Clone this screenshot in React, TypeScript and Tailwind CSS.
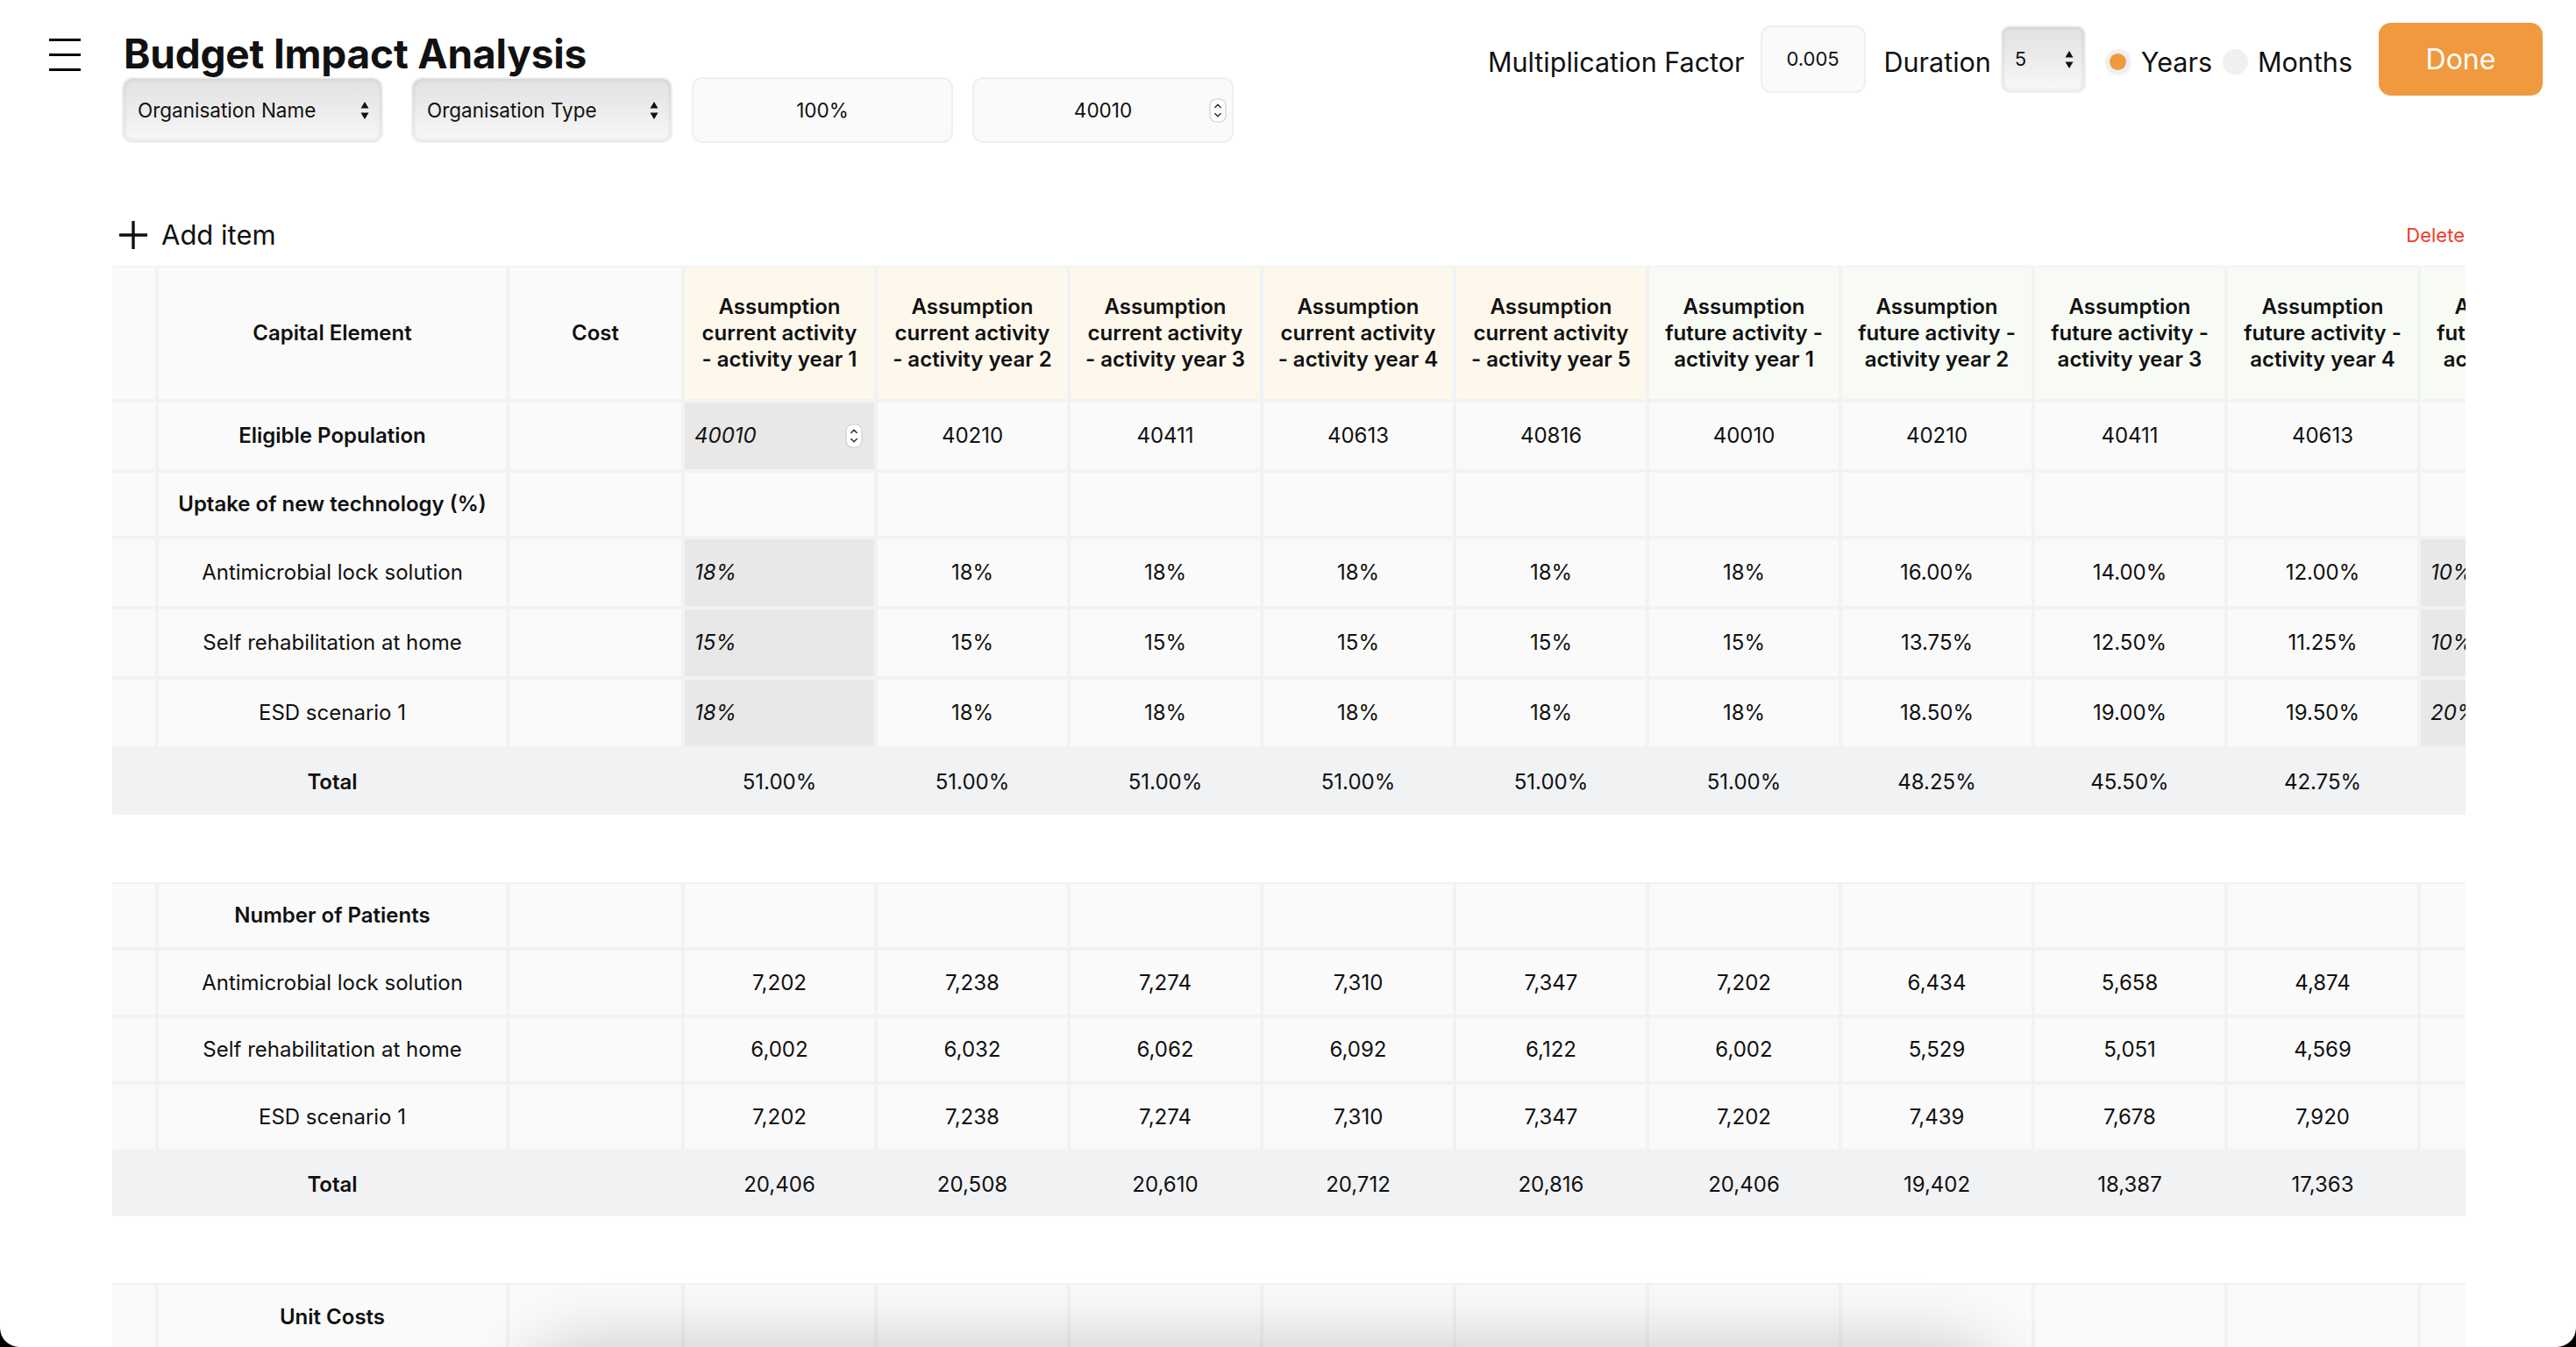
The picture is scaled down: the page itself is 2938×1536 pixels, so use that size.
import React from "react";

const GRID = "grid grid-cols-[49px_396px_196px_repeat(10,216px)] gap-x-[4px]";

type InputCell = { v: string; input: true; spin?: boolean };
type Cell = string | InputCell;

function Spinner() {
  return (
    <svg width="20" height="28" viewBox="0 0 20 28">
      <rect x="1" y="1" width="18" height="26" rx="7" fill="#ffffff" stroke="#cfcfcf" strokeWidth="1.2" />
      <path d="M6.8 10.5 L10 7.2 L13.2 10.5" fill="none" stroke="#333" strokeWidth="1.5" strokeLinecap="round" strokeLinejoin="round" />
      <path d="M6.8 17.5 L10 20.8 L13.2 17.5" fill="none" stroke="#333" strokeWidth="1.5" strokeLinecap="round" strokeLinejoin="round" />
    </svg>
  );
}

function SelectArrows() {
  return (
    <svg width="10" height="24" viewBox="0 0 10 24">
      <path d="M5 2 L9.5 9.5 H0.5 Z" fill="#111" />
      <path d="M5 22 L9.5 14.5 H0.5 Z" fill="#111" />
    </svg>
  );
}

function DataCell({ c }: { c: Cell }) {
  if (typeof c === "string") {
    return <div className="bg-[#fafafa] flex items-center justify-center whitespace-nowrap">{c}</div>;
  }
  return (
    <div className="bg-[#e8e8e8] flex items-center justify-between pl-[11px] pr-[13px] italic whitespace-nowrap">
      <span>{c.v}</span>
      {c.spin ? <Spinner /> : null}
    </div>
  );
}

function DataRow({ label, bold, cells, h }: { label: string; bold?: boolean; cells: Cell[]; h: string }) {
  return (
    <div className={`${GRID} ${h}`}>
      <div className="bg-[#fafafa]" />
      <div className={`bg-[#fafafa] flex items-center justify-center whitespace-nowrap ${bold ? "font-semibold" : ""}`}>
        {label}
      </div>
      <div className="bg-[#fafafa]" />
      {cells.map((c, i) => (
        <DataCell key={i} c={c} />
      ))}
    </div>
  );
}

function TotalRow({ values, h }: { values: string[]; h: string }) {
  return (
    <div className={`${GRID} ${h} bg-[#f1f2f4]`}>
      <div />
      <div className="flex items-center justify-center font-semibold">Total</div>
      <div />
      {values.map((v, i) => (
        <div key={i} className="flex items-center justify-center whitespace-nowrap">
          {v}
        </div>
      ))}
    </div>
  );
}

const empty10 = ["", "", "", "", "", "", "", "", "", ""];

export default function App() {
  const headers: { lines: string[]; future: boolean }[] = [
    ...[1, 2, 3, 4, 5].map((n) => ({
      lines: ["Assumption", "current activity", `- activity year ${n}`],
      future: false,
    })),
    ...[1, 2, 3, 4, 5].map((n) => ({
      lines: ["Assumption", "future activity -", `activity year ${n}`],
      future: true,
    })),
  ];

  return (
    <div className="h-[1536px] w-[2938px] bg-black overflow-hidden font-['Inter','Liberation_Sans',sans-serif] text-[#111]">
      <div className="relative h-full w-full bg-white rounded-b-[22px] overflow-hidden">
        {/* Header */}
        <div className="flex items-start justify-between pt-[26px] pl-[56px] pr-[38px]">
          <div className="flex items-start">
            <div className="mt-[18px] w-[36px] flex flex-col gap-[14px]">
              <div className="h-[3px] bg-black" />
              <div className="h-[3px] bg-black" />
              <div className="h-[3px] bg-black" />
            </div>
            <div className="ml-[47px] flex flex-col">
              <h1 className="mt-[14px] text-[46px] leading-[42px] font-bold tracking-[-0.2px] pl-[2px]">Budget Impact Analysis</h1>
              <div className="mt-[6px] flex text-[22.5px]">
                <div className="w-[298px] h-[75px] rounded-[12px] border-2 border-[#eeeeee] bg-linear-to-b from-[#e2e2e2] via-[#ececec] to-[#f8f8f8] shadow-[inset_0_0_5px_rgba(0,0,0,0.13)] flex items-center justify-between pl-[16px] pr-[14px]">
                  <span>Organisation Name</span>
                  <SelectArrows />
                </div>
                <div className="ml-[32px] w-[298px] h-[75px] rounded-[12px] border-2 border-[#eeeeee] bg-linear-to-b from-[#e2e2e2] via-[#ececec] to-[#f8f8f8] shadow-[inset_0_0_5px_rgba(0,0,0,0.13)] flex items-center justify-between pl-[16px] pr-[14px]">
                  <span>Organisation Type</span>
                  <SelectArrows />
                </div>
                <div className="ml-[22px] w-[298px] h-[75px] rounded-[12px] border-2 border-[#efefef] bg-[#fafafa] flex items-center justify-center">
                  100%
                </div>
                <div className="relative ml-[22px] w-[298px] h-[75px] rounded-[12px] border-2 border-[#efefef] bg-[#fafafa] flex items-center justify-center">
                  <span>40010</span>
                  <div className="absolute right-[6px] top-[22px]">
                    <Spinner />
                  </div>
                </div>
              </div>
            </div>
          </div>

          <div className="flex items-center h-[83px] text-[30.5px]">
            <span className="mt-[6px]">Multiplication Factor</span>
            <div className="ml-[18px] w-[120px] h-[77px] rounded-[12px] border-2 border-[#efefef] bg-[#fafafa] flex items-center justify-center text-[22px]">
              0.005
            </div>
            <span className="ml-[21px] mt-[6px]">Duration</span>
            <div className="ml-[11px] w-[97px] h-[77px] rounded-[10px] border-2 border-[#eeeeee] bg-linear-to-b from-[#e2e2e2] via-[#ececec] to-[#f8f8f8] shadow-[inset_0_0_5px_rgba(0,0,0,0.13)] flex items-center justify-between pl-[14px] pr-[12px] text-[22px]">
              <span>5</span>
              <SelectArrows />
            </div>
            <div className="ml-[22px] mt-[6px] w-[30px] h-[30px] rounded-full bg-[#eff0f2] flex items-center justify-center">
              <div className="w-[19px] h-[19px] rounded-full bg-[#f0993e]" />
            </div>
            <span className="ml-[11px] mt-[6px]">Years</span>
            <div className="ml-[12px] mt-[6px] w-[29px] h-[29px] rounded-full bg-[#eff0f2]" />
            <span className="ml-[11px] mt-[6px]">Months</span>
            <button className="ml-[30px] w-[187px] h-[83px] rounded-[14px] bg-[#f0993e] text-white text-[32px]">
              Done
            </button>
          </div>
        </div>

        {/* Add item row */}
        <div className="mt-[85px] h-[40px] flex items-center justify-between pl-[135px] pr-[127px]">
          <div className="flex items-center">
            <svg width="34" height="34" viewBox="0 0 34 34">
              <path d="M17 1 V33 M1 17 H33" stroke="#111" strokeWidth="3.4" />
            </svg>
            <span className="ml-[15px] text-[31px]">Add item</span>
          </div>
          <span className="text-[22px] text-[#ef3b2d]">Delete</span>
        </div>

        {/* Table 1 */}
        <div className="mt-[15px] ml-[128px] w-[2684px] overflow-hidden text-[24px]">
          <div className="w-max bg-[#f1f2f4] pt-[2px] flex flex-col gap-y-[4px]">
            <div className={`${GRID} h-[150px] font-semibold leading-[30px]`}>
              <div className="bg-[#fafafa]" />
              <div className="bg-[#fafafa] flex items-center justify-center">Capital Element</div>
              <div className="bg-[#fafafa] flex items-center justify-center">Cost</div>
              {headers.map((h, i) => (
                <div
                  key={i}
                  className={`${h.future ? "bg-[#f7fbf4]" : "bg-[#fdf7ec]"} flex flex-col items-center justify-center text-center whitespace-nowrap`}
                >
                  {h.lines.map((l, j) => (
                    <span key={j}>{l}</span>
                  ))}
                </div>
              ))}
            </div>
            <DataRow
              label="Eligible Population"
              bold
              h="h-[76px]"
              cells={[
                { v: "40010", input: true, spin: true },
                "40210",
                "40411",
                "40613",
                "40816",
                "40010",
                "40210",
                "40411",
                "40613",
                "40816",
              ]}
            />
            <DataRow label="Uptake of new technology (%)" bold h="h-[72px]" cells={empty10} />
            <DataRow
              label="Antimicrobial lock solution"
              h="h-[76px]"
              cells={[
                { v: "18%", input: true },
                "18%",
                "18%",
                "18%",
                "18%",
                "18%",
                "16.00%",
                "14.00%",
                "12.00%",
                { v: "10%", input: true },
              ]}
            />
            <DataRow
              label="Self rehabilitation at home"
              h="h-[76px]"
              cells={[
                { v: "15%", input: true },
                "15%",
                "15%",
                "15%",
                "15%",
                "15%",
                "13.75%",
                "12.50%",
                "11.25%",
                { v: "10%", input: true },
              ]}
            />
            <DataRow
              label="ESD scenario 1"
              h="h-[76px]"
              cells={[
                { v: "18%", input: true },
                "18%",
                "18%",
                "18%",
                "18%",
                "18%",
                "18.50%",
                "19.00%",
                "19.50%",
                { v: "20%", input: true },
              ]}
            />
            <TotalRow
              h="h-[74px]"
              values={["51.00%", "51.00%", "51.00%", "51.00%", "51.00%", "51.00%", "48.25%", "45.50%", "42.75%", "40.00%"]}
            />
          </div>
        </div>

        {/* Table 2 */}
        <div className="mt-[77px] ml-[128px] w-[2684px] overflow-hidden text-[24px]">
          <div className="w-max bg-[#f1f2f4] pt-[2px] flex flex-col gap-y-[4px]">
            <DataRow label="Number of Patients" bold h="h-[72px]" cells={empty10} />
            <DataRow
              label="Antimicrobial lock solution"
              h="h-[73px]"
              cells={["7,202", "7,238", "7,274", "7,310", "7,347", "7,202", "6,434", "5,658", "4,874", "4,081"]}
            />
            <DataRow
              label="Self rehabilitation at home"
              h="h-[72px]"
              cells={["6,002", "6,032", "6,062", "6,092", "6,122", "6,002", "5,529", "5,051", "4,569", "4,082"]}
            />
            <DataRow
              label="ESD scenario 1"
              h="h-[73px]"
              cells={["7,202", "7,238", "7,274", "7,310", "7,347", "7,202", "7,439", "7,678", "7,920", "8,163"]}
            />
            <TotalRow
              h="h-[73px]"
              values={["20,406", "20,508", "20,610", "20,712", "20,816", "20,406", "19,402", "18,387", "17,363", "16,326"]}
            />
          </div>
        </div>

        {/* Table 3 */}
        <div className="mt-[76px] ml-[128px] w-[2684px] overflow-hidden text-[24px]">
          <div className="w-max bg-[#f1f2f4] pt-[2px] flex flex-col gap-y-[4px]">
            <DataRow label="Unit Costs" bold h="h-[74px]" cells={empty10} />
            <DataRow label="" h="h-[72px]" cells={empty10} />
          </div>
        </div>

        {/* shadow of an element just below the visible area */}
        <div className="absolute left-[600px] w-[1680px] top-[1548px] h-[200px] rounded-[80px] bg-white shadow-[0_0_70px_24px_rgba(0,0,0,0.16)]" />
      </div>
    </div>
  );
}
